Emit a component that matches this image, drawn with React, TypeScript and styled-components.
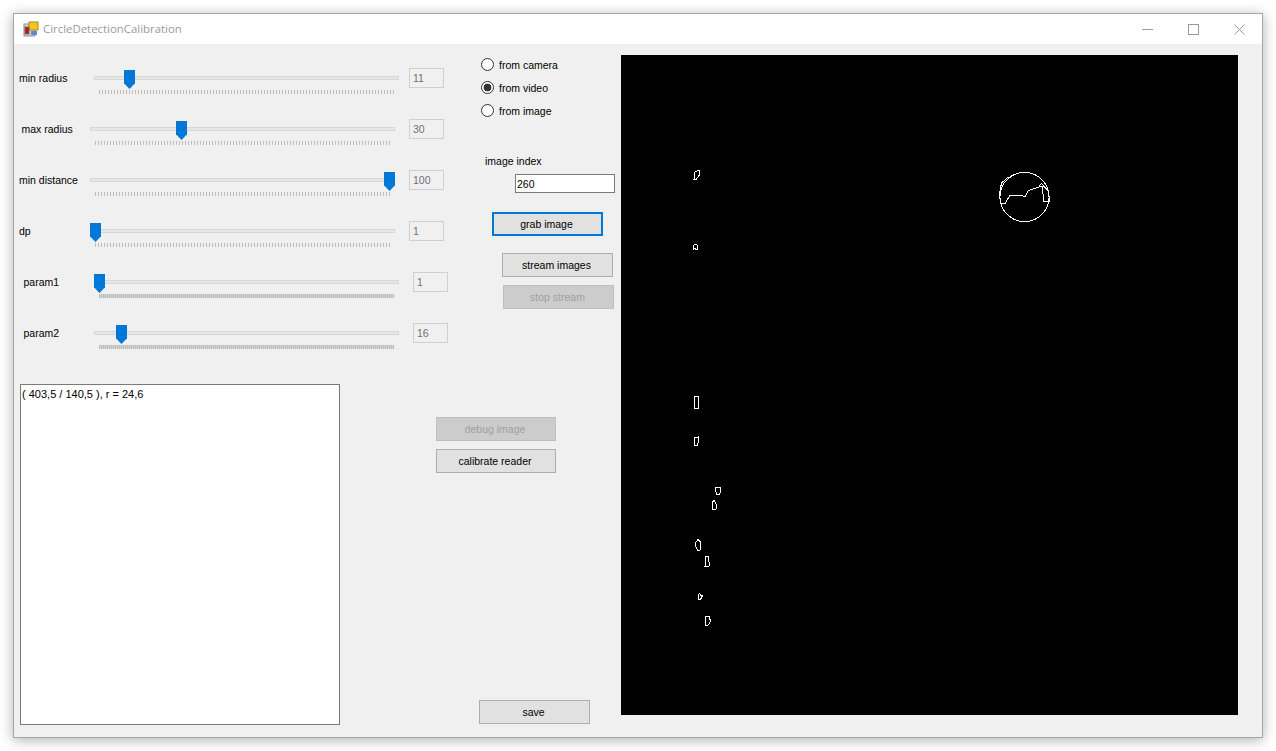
import styled, { createGlobalStyle } from "styled-components";

const GlobalStyle = createGlobalStyle`
  html, body {
    margin: 0;
    background: #fff;
  }
  body {
    font-family: "Liberation Sans", Arial, sans-serif;
    font-size: 10.5px;
    color: #000;
  }
  * {
    box-sizing: border-box;
  }
`;

const Page = styled.div`
  width: 1276px;
  height: 751px;
  padding: 13px;
  overflow: hidden;
`;

const Window = styled.div`
  width: 1250px;
  height: 725px;
  display: flex;
  flex-direction: column;
  border: 1px solid #a6a6a6;
  box-shadow: 0 2px 12px rgba(0, 0, 0, 0.32);
  background: #f0f0f0;
`;

const TitleBar = styled.header`
  height: 30px;
  display: flex;
  align-items: center;
  padding-left: 9px;
  background: #fff;
`;

const TitleText = styled.span`
  margin: 0 0 2px 4px;
  flex: 1;
  font-family: "Open Sans", sans-serif;
  font-size: 11.4px;
  color: #9a9a9a;
`;

const WindowButton = styled.div`
  width: 46px;
  height: 30px;
  display: flex;
  align-items: center;
  justify-content: center;
`;

const Client = styled.main`
  flex: 1;
  display: flex;
  min-height: 0;
`;

const Controls = styled.div`
  width: 601px;
  display: flex;
  flex-direction: column;
`;

const UpperPanel = styled.div`
  height: 340px;
  display: flex;
`;

const SliderList = styled.div`
  width: 460px;
  padding-top: 9px;
  display: flex;
  flex-direction: column;
  gap: 1px;
`;

const SliderRow = styled.div<{ $labelX: number }>`
  height: 50px;
  display: flex;
  align-items: center;
  padding-left: ${(p) => p.$labelX}px;
`;

const SliderLabel = styled.span<{ $width: number }>`
  width: ${(p) => p.$width}px;
  white-space: nowrap;
`;

const Slider = styled.div`
  position: relative;
  width: 305px;
  height: 30px;
  padding-top: 13px;
`;

const Track = styled.div`
  height: 4px;
  background: #e4e7e5;
  border: 1px solid #d6d8d6;
`;

const Ticks = styled.div<{ $dense: boolean }>`
  height: 4px;
  margin: 10px 5px 0;
  background: repeating-linear-gradient(
    90deg,
    #bcbcbc 0,
    #bcbcbc 1px,
    ${(p) => (p.$dense ? "#d4d4d4" : "#f0f0f0")} 1px,
    ${(p) => (p.$dense ? "#d4d4d4" : "#f0f0f0")} ${(p) => (p.$dense ? "2px" : "3px")}
  );
`;

const Thumb = styled.div`
  position: absolute;
  top: 7px;
  width: 11px;
  height: 19px;
  background: #0078d7;
  clip-path: polygon(0 0, 100% 0, 100% 70%, 50% 100%, 0 70%);
`;

const ValueBox = styled.div<{ $gap: number }>`
  width: 35px;
  height: 20px;
  margin-left: ${(p) => p.$gap}px;
  padding: 0 3px;
  line-height: 18px;
  border: 1px solid #cfcfcf;
  color: #707070;
`;

const SourcePanel = styled.div`
  flex: 1;
  padding-top: 9px;
  display: flex;
  flex-direction: column;
`;

const RadioRow = styled.label`
  height: 23px;
  display: flex;
  align-items: center;
  gap: 5px;
  padding-left: 7px;
`;

const RadioInput = styled.input`
  appearance: none;
  width: 13px;
  height: 13px;
  margin: 0;
  border: 1px solid #333;
  border-radius: 50%;
  background: #fff;
  &:checked {
    background: radial-gradient(circle, #333 0, #333 3.6px, #fff 4.2px);
  }
`;

const IndexLabel = styled.span`
  margin: 33px 0 0 11px;
  line-height: 13px;
`;

const IndexInput = styled.input`
  width: 100px;
  height: 19px;
  margin: 6px 0 0 41px;
  padding: 0 1px;
  border: 1px solid #7a7a7a;
  border-radius: 0;
  outline: none;
  background: #fff;
  font: inherit;
  color: #000;
`;

const Button = styled.button<{ $x: number; $top: number; $width?: number; $focused?: boolean }>`
  display: block;
  width: ${(p) => p.$width ?? 111}px;
  height: 24px;
  margin: ${(p) => p.$top}px 0 0 ${(p) => p.$x}px;
  padding: 0 2px 0 0;
  flex: none;
  border: ${(p) => (p.$focused ? "2px solid #0078d7" : "1px solid #adadad")};
  border-radius: 0;
  background: #e1e1e1;
  font: inherit;
  color: #000;
  &:disabled {
    background: #cccccc;
    border-color: #bfbfbf;
    color: #a0a0a0;
  }
`;

const LowerPanel = styled.div`
  flex: 1;
  display: flex;
`;

const LogBox = styled.div`
  width: 320px;
  height: 341px;
  margin-left: 6px;
  padding: 2px 1px;
  font-size: 11px;
  line-height: 14px;
  border: 1px solid #7a7a7a;
  background: #fff;
`;

const ActionPanel = styled.div`
  flex: 1;
  display: flex;
  flex-direction: column;
`;

const Preview = styled.svg`
  display: block;
  width: 617px;
  height: 660px;
  margin: 11px 0 0 6px;
  background: #000;
`;

const sliders = [
  { name: "min radius", value: 11, max: 100, labelX: 5, trackX: 80, gap: 10 },
  { name: "max radius", value: 30, max: 100, labelX: 7.5, trackX: 76, gap: 14 },
  { name: "min distance", value: 100, max: 100, labelX: 5, trackX: 76, gap: 14 },
  { name: "dp", value: 1, max: 100, labelX: 5, trackX: 76, gap: 14 },
  { name: "param1", value: 1, max: 201, labelX: 9.5, trackX: 80, gap: 14, dense: true },
  { name: "param2", value: 16, max: 201, labelX: 9.5, trackX: 80, gap: 14, dense: true },
];

// blobs in screen coordinates, the viewBox of the preview starts at 621,55
const blobs = [
  "694,179 695,172 697,171 700,170.5 699.5,175 696.5,179",
  "693.5,245.5 694.5,244.5 696.5,244.5 697.5,246 697.5,249 696,249.5 695,248 693.5,249",
  "694.5,396 698.5,396 698.5,408 694.5,408",
  "694.5,438 698.5,437 698.5,442 697,445.5 695,445.5 694,442",
  "716,487 720,487 720.5,492 719,494.5 717,494.5 715.5,491",
  "712,503 714,500 716,504 716.5,509 712,509.5",
  "696,542 698,539.5 700.5,542 700,550 697.5,550 695.5,546",
  "705.5,562 705.5,556 708,556 708,560 709.5,563 709,566.5 705,566.5",
  "698,596 699.5,593.5 700.5,595 702.5,595 701.5,598 700,599.5 698,599",
  "705,616 709,616.5 710.5,621 708.5,625 705,625.5",
];

const ridge =
  "1000.5,203.5 1005,203.5 1009.5,196 1020,195 1025,196.5 1028.5,190.5 1035,188.5 1042,186 1044,201.5 1049.5,201.5 1048.5,191.5 1041.5,183.5 1038.5,186.5";

const ridgeEdge = "1000.5,203.5 999.5,193.5 1001.5,183 1008.5,177";

function AppIcon() {
  return (
    <svg width="16" height="16" viewBox="0 0 16 16">
      <rect x="1" y="3" width="11" height="12" fill="#d8d8d8" stroke="#8c8c8c" />
      <rect x="6" y="1" width="9" height="8" fill="#f5c518" stroke="#a88a2a" />
      <rect x="2" y="6" width="4" height="7" fill="#b5160f" stroke="#7d6a60" />
      <rect x="8" y="10" width="6" height="4" fill="#5a8ad8" />
    </svg>
  );
}

function App() {
  return (
    <Page>
      <GlobalStyle />
      <Window>
        <TitleBar>
          <AppIcon />
          <TitleText>CircleDetectionCalibration</TitleText>
          <WindowButton>
            <svg width="11" height="11" viewBox="0 0 11 11">
              <path d="M0 5.5H11" stroke="#999" />
            </svg>
          </WindowButton>
          <WindowButton>
            <svg width="11" height="11" viewBox="0 0 11 11">
              <rect x="0.5" y="0.5" width="10" height="10" fill="none" stroke="#999" />
            </svg>
          </WindowButton>
          <WindowButton>
            <svg width="11" height="11" viewBox="0 0 11 11">
              <path d="M0.5 0.5L10.5 10.5M10.5 0.5L0.5 10.5" stroke="#999" />
            </svg>
          </WindowButton>
        </TitleBar>
        <Client>
          <Controls>
            <UpperPanel>
              <SliderList>
                {sliders.map((s) => (
                  <SliderRow key={s.name} $labelX={s.labelX}>
                    <SliderLabel $width={s.trackX - s.labelX}>{s.name}</SliderLabel>
                    <Slider>
                      <Track />
                      <Ticks $dense={!!s.dense} />
                      <Thumb style={{ left: Math.round(((s.value - 1) / (s.max - 1)) * 294) }} />
                    </Slider>
                    <ValueBox $gap={s.gap}>{s.value}</ValueBox>
                  </SliderRow>
                ))}
              </SliderList>
              <SourcePanel>
                <RadioRow>
                  <RadioInput type="radio" name="source" />
                  from camera
                </RadioRow>
                <RadioRow>
                  <RadioInput type="radio" name="source" defaultChecked />
                  from video
                </RadioRow>
                <RadioRow>
                  <RadioInput type="radio" name="source" />
                  from image
                </RadioRow>
                <IndexLabel>image index</IndexLabel>
                <IndexInput defaultValue="260" />
                <Button $x={18} $top={19} $focused>
                  grab image
                </Button>
                <Button $x={28} $top={17}>
                  stream images
                </Button>
                <Button $x={29} $top={8} disabled>
                  stop stream
                </Button>
              </SourcePanel>
            </UpperPanel>
            <LowerPanel>
              <LogBox>( 403,5 / 140,5 ), r = 24,6</LogBox>
              <ActionPanel>
                <Button $x={96} $top={33} $width={120} disabled>
                  debug image
                </Button>
                <Button $x={96} $top={8} $width={120}>
                  calibrate reader
                </Button>
                <Button $x={139} $top={227}>
                  save
                </Button>
              </ActionPanel>
            </LowerPanel>
          </Controls>
          <Preview viewBox="621 55 617 660" shapeRendering="crispEdges">
            <g fill="none" stroke="#fff" strokeWidth="1">
              <circle cx="1024.5" cy="197" r="24.6" />
              <polyline points={ridge} />
              <polyline points={ridgeEdge} />
              {blobs.map((points) => (
                <polygon key={points} points={points} />
              ))}
            </g>
          </Preview>
        </Client>
      </Window>
    </Page>
  );
}

export default App;
